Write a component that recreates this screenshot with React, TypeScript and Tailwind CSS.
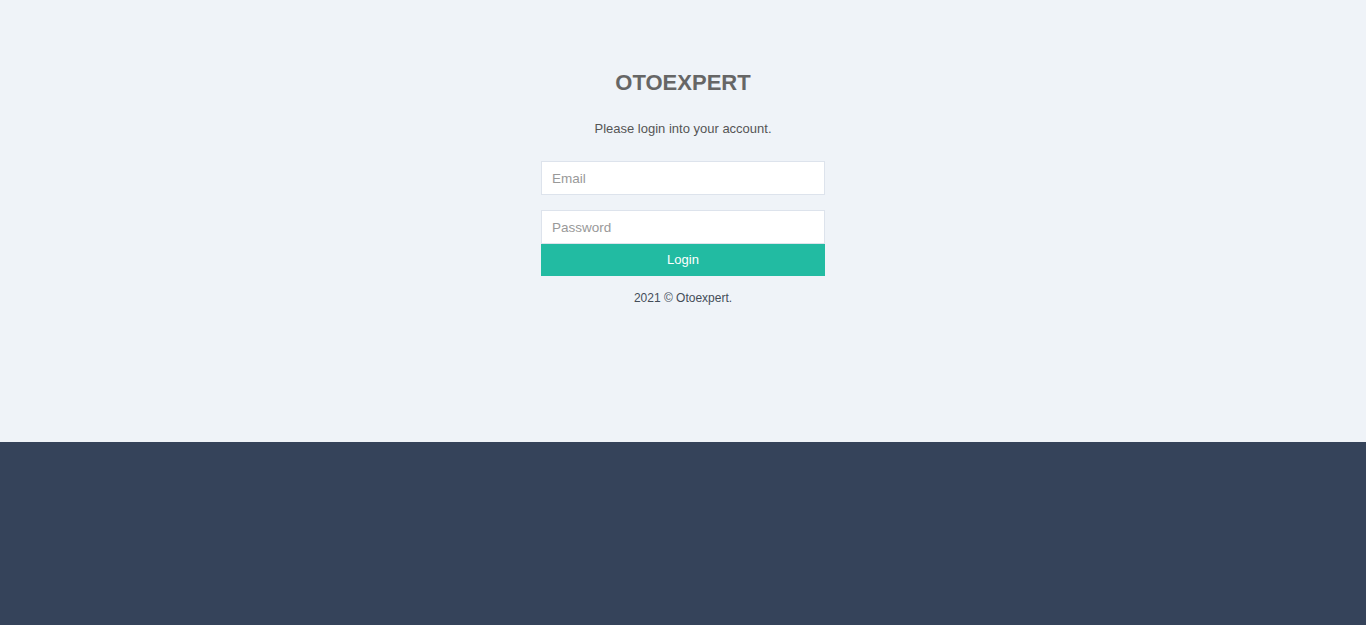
export default function App() {
  return (
    <div className="flex h-[625px] w-full flex-col font-['Liberation_Sans',Arial,sans-serif]">
      <div className="flex h-[442px] flex-col items-center bg-[#eff3f8]">
        <h1 className="mt-[70px] text-[22px] font-bold leading-[26px] text-[#666666]">OTOEXPERT</h1>
        <p className="mt-[24px] text-[13px] leading-[18px] text-[#555555]">Please login into your account.</p>
        <div className="mt-[23px] flex w-[284px] flex-col">
          <input
            className="h-[34px] w-full border border-[#dde3ec] bg-white px-[10px] text-[13.5px] text-[#555] placeholder:text-[#999999] outline-none"
            placeholder="Email"
          />
          <input
            type="password"
            className="mt-[15px] h-[34px] w-full border border-[#dde3ec] bg-white px-[10px] text-[13.5px] text-[#555] placeholder:text-[#999999] outline-none"
            placeholder="Password"
          />
          <button className="h-[32px] w-full bg-[#22bba2] text-[13px] font-normal text-white">
            Login
          </button>
        </div>
        <p className="mt-[14px] text-[12px] leading-[16px] text-[#444d58]">2021 © Otoexpert.</p>
      </div>
      <div className="h-[183px] bg-[#35435a]" />
    </div>
  );
}
